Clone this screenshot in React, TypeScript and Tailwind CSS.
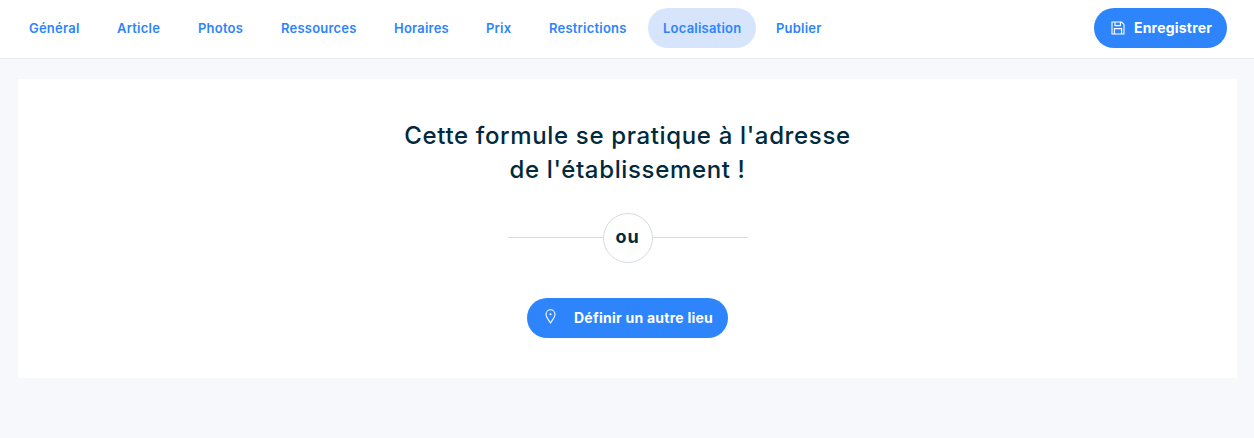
const tabs = [
  { label: "Général", width: "w-[83px]", active: false },
  { label: "Article", width: "w-[76px]", active: false },
  { label: "Photos", width: "w-[78px]", active: false },
  { label: "Ressources", width: "w-[108px]", active: false },
  { label: "Horaires", width: "w-[87px]", active: false },
  { label: "Prix", width: "w-[58px]", active: false },
  { label: "Restrictions", width: "w-[109px]", active: false },
  { label: "Localisation", width: "w-[108px]", active: true },
  { label: "Publier", width: "w-[76px]", active: false },
];

function FloppyIcon() {
  return (
    <svg viewBox="0 0 14 14" className="h-[14px] w-[14px]" fill="none" stroke="currentColor" strokeWidth="1.1">
      <path d="M1 1h9.6L13 3.4V13H1z" />
      <path d="M4 1v3.6h5.4V1" />
      <path d="M3.4 13V7.6h7.2V13" />
    </svg>
  );
}

function PinIcon() {
  return (
    <svg viewBox="0 0 11 15" className="h-[15px] w-[11px]" fill="none" stroke="currentColor" strokeWidth="1.1">
      <path d="M5.5 14C3.4 10.8 1 8 1 5.2a4.5 4.5 0 0 1 9 0C10 8 7.6 10.8 5.5 14z" />
      <circle cx="5.5" cy="5.2" r="1" fill="currentColor" stroke="none" />
    </svg>
  );
}

export default function App() {
  return (
    <div className="min-h-[438px] bg-[#f6f8fc] font-['Inter',sans-serif]">
      <nav className="flex h-[59px] items-start justify-between border-b border-[#e8eaf0] bg-white pl-[14px] pr-[27px] pt-2">
        <ul className="flex gap-[5px]">
          {tabs.map((tab) => (
            <li key={tab.label}>
              <a
                className={`flex h-10 items-center rounded-full pl-[15px] pt-px text-[13px] font-semibold tracking-[0.22px] whitespace-nowrap text-[#2d84fb] ${tab.width} ${
                  tab.active ? "bg-[#d6e5fc]" : ""
                }`}
              >
                {tab.label}
              </a>
            </li>
          ))}
        </ul>
        <button className="flex h-10 w-[133px] items-center gap-[9px] rounded-full bg-[#2d84fb] pl-[17px] text-sm font-bold tracking-[0.2px] text-white">
          <FloppyIcon />
          Enregistrer
        </button>
      </nav>

      <main className="pl-[18px] pr-[17px] pt-5">
        <section className="flex h-[299px] flex-col items-center bg-white pt-10">
          <h1 className="text-center text-2xl leading-[34px] font-medium tracking-[0.65px] text-[#012a3d]">
            Cette formule se pratique à l'adresse
            <br />
            de l'établissement !
          </h1>

          <div className="mt-[26px] flex w-[240px] items-center">
            <div className="mb-px h-px flex-1 bg-[#d3dbe1]" />
            <div className="flex h-[50px] w-[50px] items-center justify-center rounded-full border border-[#d3dbe1] pb-[2px] text-lg font-bold tracking-[0.8px] text-[#012a3d]">
              ou
            </div>
            <div className="mb-px h-px flex-1 bg-[#d3dbe1]" />
          </div>

          <button className="mt-[35px] flex h-10 w-[201px] items-center rounded-full bg-[#2d84fb] pb-px pl-[18px] text-sm font-bold tracking-[0.25px] text-white">
            <span className="-mt-[3px] flex">
              <PinIcon />
            </span>
            <span className="ml-[18px]">Définir un autre lieu</span>
          </button>
        </section>
      </main>
    </div>
  );
}
